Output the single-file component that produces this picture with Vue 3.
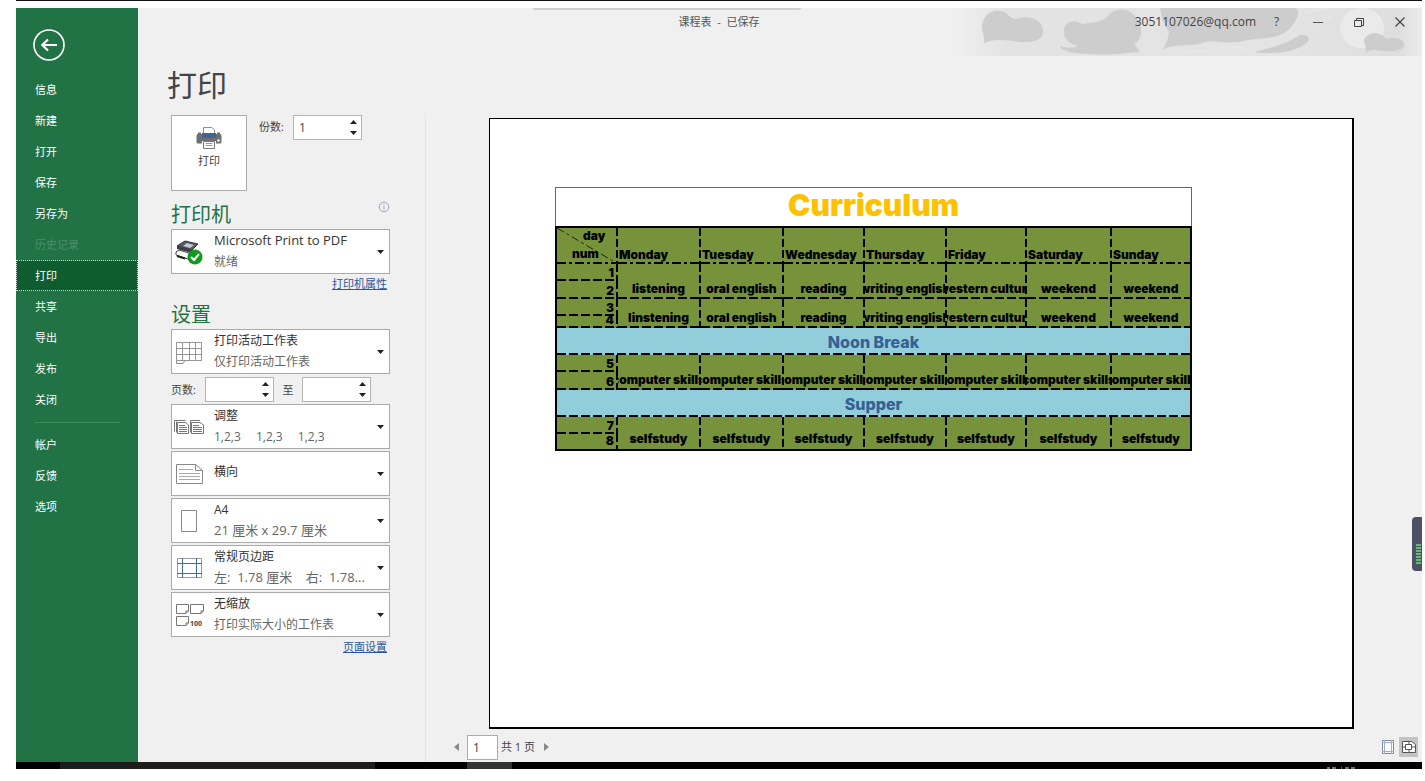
<script setup>
import { ref } from 'vue'

const navMain = [
  { label: '信息' },
  { label: '新建' },
  { label: '打开' },
  { label: '保存' },
  { label: '另存为' },
  { label: '历史记录', disabled: true },
  { label: '打印', active: true },
  { label: '共享' },
  { label: '导出' },
  { label: '发布' },
  { label: '关闭' },
]
const navExtra = [{ label: '帐户' }, { label: '反馈' }, { label: '选项' }]

const copies = ref('1')
const pageFrom = ref('')
const pageTo = ref('')
const pageNo = ref('1')

const layoutOptions = [
  { icon: 'collate', title: '调整', sub: '1,2,3\u2003 1,2,3\u2003 1,2,3' },
  { icon: 'landscape', title: '横向', sub: '' },
  { icon: 'paper', title: 'A4', sub: '21 厘米 x 29.7 厘米', latin: true },
  { icon: 'margins', title: '常规页边距', sub: '左:  1.78 厘米    右:  1.78...', latin: true },
  { icon: 'scale', title: '无缩放', sub: '打印实际大小的工作表' },
]

const days = ['Monday', 'Tuesday', 'Wednesday', 'Thursday', 'Friday', 'Saturday', 'Sunday']
const blocks = [
  { nums: [1, 2], cells: ['listening', 'oral english', 'reading', 'writing english', 'western culture', 'weekend', 'weekend'] },
  { nums: [3, 4], cells: ['linstening', 'oral english', 'reading', 'writing english', 'western culture', 'weekend', 'weekend'] },
  { band: 'Noon Break' },
  { nums: [5, 6], cells: Array(7).fill('computer skills') },
  { band: 'Supper' },
  { nums: [7, 8], cells: Array(7).fill('selfstudy') },
]
</script>

<template>
  <div class="screen">
    <div class="top-edge"></div>
    <div class="app">
      <nav class="sidebar">
        <button class="back" aria-label="返回">
          <svg width="34" height="34" viewBox="0 0 34 34" fill="none" stroke="#fff">
            <circle cx="17" cy="17" r="15" stroke-width="1.6" />
            <path d="M25 17H10.5M16 11.5L10.3 17L16 22.5" stroke-width="2.2" />
          </svg>
        </button>
        <button
          v-for="n in navMain"
          :key="n.label"
          class="nav-item"
          :class="{ active: n.active }"
          :disabled="n.disabled"
        >{{ n.label }}</button>
        <div class="nav-sep"></div>
        <button v-for="n in navExtra" :key="n.label" class="nav-item">{{ n.label }}</button>
      </nav>

      <div class="body">
        <header class="titlebar">
          <div class="pull-tab"></div>
          <svg class="clouds" width="472" height="48" viewBox="0 0 472 48">
            <defs>
              <linearGradient id="fade" x1="0" x2="1" y1="0" y2="0">
                <stop offset="0" stop-color="#e4e4e4" stop-opacity="0" />
                <stop offset="0.12" stop-color="#e3e3e3" />
                <stop offset="0.7" stop-color="#e4e4e4" />
                <stop offset="0.95" stop-color="#dedede" />
                <stop offset="1" stop-color="#ebebeb" />
              </linearGradient>
            </defs>
            <rect width="472" height="48" fill="url(#fade)" />
            <g fill="#cdcdcd">
              <path d="M32 20C32 6 44 0 54 4C60 7 60 11 66 11C80 6 92 12 93 22C94 32 84 35 70 34C55 32 42 30 33 36C36 31 33 28 32 20Z" />
              <path d="M114 24C113 14 124 10 132 16C140 14 150 16 158 8C166 -2 182 0 186 10C194 18 192 32 184 36L190 44C180 44 160 48 140 46C122 46 110 42 110 38C118 40 124 40 128 38C118 36 114 30 114 24Z" />
              <path d="M210 0H346C350 4 348 12 340 20C330 32 310 30 298 32C276 38 262 30 250 36C236 38 222 36 212 42Q218 34 219 24Q212 14 210 0Z" />
              <path d="M304 44C320 40 336 36 348 28C358 24 364 32 352 38C340 46 318 46 304 44Z" />
            </g>
            <ellipse cx="412" cy="20" rx="22" ry="20" fill="#eaeaea" />
            <path d="M414 46C418 42 415 38 414 34C414 24 430 22 436 31C446 28 456 32 454 38C452 44 434 44 426 42C420 42 416 44 414 46Z" fill="#cdcdcd" />
            <path d="M350 6L376 0M356 20L382 8M250 44Q280 34 306 44M236 46Q250 40 262 46" stroke="#eaeaea" stroke-width="2" stroke-dasharray="2 2" fill="none" />
          </svg>
          <div class="doc-title">课程表&nbsp; -&nbsp; 已保存</div>
          <div class="account">
            <span class="mail">3051107026@qq.com</span>
            <button class="win" aria-label="帮助">?</button>
            <button class="win" aria-label="最小化">
              <svg width="12" height="12" viewBox="0 0 12 12" stroke="#555" fill="none"><path d="M1 6.5H11" /></svg>
            </button>
            <button class="win" aria-label="还原">
              <svg width="12" height="12" viewBox="0 0 12 12" stroke="#444" fill="none"><path d="M1.5 4.5H8.5V10.5H1.5ZM3.5 4.5V2.5H10.5V9.5H8.5" /></svg>
            </button>
            <button class="win" aria-label="关闭窗口">
              <svg width="12" height="12" viewBox="0 0 12 12" stroke="#444" fill="none"><path d="M1.5 1.5L10.5 10.5M10.5 1.5L1.5 10.5" stroke-width="1.2" /></svg>
            </button>
          </div>
        </header>

        <div class="work">
          <section class="panel">
            <h1>打印</h1>
            <div class="print-row">
              <button class="print-btn">
                <svg width="26" height="24" viewBox="0 0 26 24">
                  <path d="M7.5 8V1.5H16L18.5 4V8" fill="#fff" stroke="#7c93ad" />
                  <path d="M2 8H24Q25.500 8 25.500 10V16Q25.500 17.500 24 17.500H2Q.5 17.500 .5 16V10Q.5 8 2 8Z" fill="#6d6f75" />
                  <rect x="6" y="7" width="14" height="5" fill="#41668c" />
                  <rect x="2" y="6.500" width="3" height="2" fill="#6d6f75" />
                  <rect x="21" y="6.500" width="3" height="2" fill="#6d6f75" />
                  <circle cx="22.500" cy="14.500" r="1.300" fill="#fff" />
                  <rect x="6" y="15" width="14" height="3" fill="#fff" />
                  <path d="M7.500 15.500H18.500V22.500H7.500Z" fill="#fff" stroke="#777" />
                  <path d="M9.500 17.500H16.500M9.500 19.500H16.500" stroke="#999" />
                </svg>
                <span>打印</span>
              </button>
              <label class="field-label" for="copies">份数:</label>
              <span class="spin">
                <input id="copies" v-model="copies" type="text" />
                <span class="arrows">
                  <button aria-label="增加份数"><svg width="7" height="4" viewBox="0 0 7 4"><path d="M0 4L3.500 0L7 4Z" fill="#222" /></svg></button>
                  <button aria-label="减少份数"><svg width="7" height="4" viewBox="0 0 7 4"><path d="M0 0L3.500 4L7 0Z" fill="#222" /></svg></button>
                </span>
              </span>
            </div>

            <div class="heading-row">
              <h2>打印机</h2>
              <svg class="info" width="12" height="12" viewBox="0 0 12 12" fill="none" stroke="#9da3c4">
                <circle cx="6" cy="6" r="4.800" />
                <path d="M6 5V9M6 3V4" />
              </svg>
            </div>
            <button class="drop" aria-haspopup="listbox">
              <span class="drop-icon">
                <svg width="30" height="28" viewBox="0 0 30 28">
                  <path d="M3 8L11 3L24 6L18 12Z" fill="#555863" stroke="#33353d" />
                  <path d="M9 8L13 5L20 7L16 10Z" fill="#c3c9d4" />
                  <path d="M3 8L18 12V15L3 11Z" fill="#3c3e47" />
                  <path d="M2 14L5 12L18 16L14 21L2 17Z" fill="#fff" stroke="#3c3e47" />
                  <path d="M3 18L11 20.500" stroke="#222" stroke-width="2" />
                  <circle cx="21" cy="19" r="7.500" fill="#119a1c" />
                  <path d="M17 19L20 22L25 16" fill="none" stroke="#fff" stroke-width="2" />
                </svg>
              </span>
              <span class="drop-text"><b class="latin">Microsoft Print to PDF</b><i>就绪</i></span>
              <svg class="caret" width="7" height="4" viewBox="0 0 7 4"><path d="M0 0L3.500 4L7 0Z" fill="#222" /></svg>
            </button>
            <a class="more" href="#">打印机属性</a>

            <h2 class="settings-title">设置</h2>
            <div class="settings">
              <button class="drop" aria-haspopup="listbox">
                <span class="drop-icon">
                  <svg width="30" height="28" viewBox="0 0 30 28" fill="none" stroke="#8a8a8a">
                    <path d="M2.500 4.500H27.500V22.500H2.500ZM8.500 4.500V22.500M15.500 4.500V22.500M21.500 4.500V22.500M2.500 10.500H27.500M2.500 16.500H27.500" stroke-width="0.900" />
                    <path d="M2.500 22.500V25.500H9L11 22.500" />
                  </svg>
                </span>
                <span class="drop-text"><b>打印活动工作表</b><i>仅打印活动工作表</i></span>
                <svg class="caret" width="7" height="4" viewBox="0 0 7 4"><path d="M0 0L3.500 4L7 0Z" fill="#222" /></svg>
              </button>

              <div class="pages-row">
                <label class="pages-label" for="from">页数:</label>
                <span class="spin">
                  <input id="from" v-model="pageFrom" type="text" />
                  <span class="arrows">
                    <button aria-label="起始页加一"><svg width="7" height="4" viewBox="0 0 7 4"><path d="M0 4L3.500 0L7 4Z" fill="#222" /></svg></button>
                    <button aria-label="起始页减一"><svg width="7" height="4" viewBox="0 0 7 4"><path d="M0 0L3.500 4L7 0Z" fill="#222" /></svg></button>
                  </span>
                </span>
                <label class="to-label" for="to">至</label>
                <span class="spin">
                  <input id="to" v-model="pageTo" type="text" />
                  <span class="arrows">
                    <button aria-label="结束页加一"><svg width="7" height="4" viewBox="0 0 7 4"><path d="M0 4L3.500 0L7 4Z" fill="#222" /></svg></button>
                    <button aria-label="结束页减一"><svg width="7" height="4" viewBox="0 0 7 4"><path d="M0 0L3.500 4L7 0Z" fill="#222" /></svg></button>
                  </span>
                </span>
              </div>

              <button v-for="o in layoutOptions" :key="o.icon" class="drop" aria-haspopup="listbox">
                <span class="drop-icon">
                  <svg v-if="o.icon === 'collate'" width="30" height="28" viewBox="0 0 30 28" fill="none" stroke="#777">
                    <path d="M.5 18.500V7.500H11.500M2.500 19.500V8.500" />
                    <path d="M3.500 9.500H11.500L14.500 12V20.500H3.500ZM5 12.500H11M5 14.500H13M5 16.500H13M5 18.500H13" fill="#fff" />
                    <path d="M16.500 19.500V7.500H26" />
                    <path d="M17.500 9.500H26L29.500 12V20.500H17.500ZM19 12.500H25M19 14.500H28M19 16.500H28M19 18.500H28" fill="#fff" />
                  </svg>
                  <svg v-else-if="o.icon === 'landscape'" width="30" height="28" viewBox="0 0 30 28" fill="none" stroke="#888">
                    <path d="M2.500 4.500H21.500L28.500 10.500V23.500H2.500ZM21.500 4.500V10.500H28.500" />
                    <path d="M5 9.500H19M5 13.500H26M5 16.500H26M5 19.500H26" stroke="#aaa" />
                  </svg>
                  <svg v-else-if="o.icon === 'paper'" width="30" height="28" viewBox="0 0 30 28" fill="none" stroke="#888">
                    <path d="M7.500 3.500H22.500V24.500H7.500Z" />
                  </svg>
                  <svg v-else-if="o.icon === 'margins'" width="30" height="28" viewBox="0 0 30 28" fill="none">
                    <path d="M3.500 4.500H27.500V23.500H3.500Z" stroke="#999" />
                    <path d="M8.500 4V24M22.500 4V24M3 9.500H28M3 19.500H28" stroke="#3f6ba6" />
                  </svg>
                  <svg v-else width="30" height="28" viewBox="0 0 30 28" fill="none" stroke="#777">
                    <path d="M2.500 3.500H14.500V10L12 12.500H2.500ZM14.500 10H12V12.500" />
                    <path d="M16.500 3.500H29.500V10L27 12.500H16.500ZM29.500 10H27V12.500" />
                    <path d="M2.500 15.500H14.500V22L12 24.500H2.500ZM14.500 22H12V24.500" />
                    <text x="16" y="25" class="pct">100</text>
                  </svg>
                </span>
                <span class="drop-text"><b>{{ o.title }}</b><i v-if="o.sub" :class="{ latin: o.latin }">{{ o.sub }}</i></span>
                <svg class="caret" width="7" height="4" viewBox="0 0 7 4"><path d="M0 0L3.500 4L7 0Z" fill="#222" /></svg>
              </button>
            </div>
            <a class="more" href="#">页面设置</a>
          </section>

          <section class="preview">
            <div class="paper">
              <table class="sheet">
                <colgroup>
                  <col class="c0" /><col class="c1" /><col class="c2" /><col class="c3" /><col class="c4" /><col class="c5" /><col class="c6" /><col class="c7" />
                </colgroup>
                <caption>Curriculum</caption>
                <tbody>
                  <tr class="days">
                    <th class="corner">
                      <svg class="diag" viewBox="0 0 61 36" preserveAspectRatio="none">
                        <path d="M0 0L61 36" stroke="#1d2a08" stroke-dasharray="8 3 3 3" />
                      </svg>
                      <span class="day">day</span>
                      <span class="num">num</span>
                    </th>
                    <th v-for="d in days" :key="d">{{ d }}</th>
                  </tr>
                  <template v-for="(b, bi) in blocks" :key="bi">
                    <tr v-if="b.band" class="band">
                      <td colspan="8">{{ b.band }}</td>
                    </tr>
                    <template v-else>
                      <tr :class="'upper u' + b.nums[0]">
                        <th>{{ b.nums[0] }}</th>
                        <td v-for="(c, ci) in b.cells" :key="ci" rowspan="2">
                          <div class="clip"><span>{{ c }}</span></div>
                        </td>
                      </tr>
                      <tr :class="'lower l' + b.nums[1]">
                        <th>{{ b.nums[1] }}</th>
                      </tr>
                    </template>
                  </template>
                </tbody>
              </table>
            </div>
            <footer class="pager">
              <button class="step" aria-label="上一页"><svg width="5" height="8" viewBox="0 0 5 8"><path d="M5 0V8L0 4Z" fill="#888" /></svg></button>
              <input v-model="pageNo" type="text" aria-label="当前页" />
              <span>共 1 页</span>
              <button class="step" aria-label="下一页"><svg width="5" height="8" viewBox="0 0 5 8"><path d="M0 0V8L5 4Z" fill="#888" /></svg></button>
              <div class="view-tools">
                <button aria-label="显示边距">
                  <svg width="14" height="14" viewBox="0 0 14 14" fill="none">
                    <path d="M1.500 .5H12.500V13.500H1.500Z" stroke="#888" fill="#fff" />
                    <path d="M3.500 0V14M10.500 0V14M1 2.500H13M1 11.500H13" stroke="#8db4dc" />
                  </svg>
                </button>
                <button class="on" aria-label="缩放到页面">
                  <svg width="14" height="14" viewBox="0 0 14 14" fill="none">
                    <path d="M.5 1.500H9.500L13.500 4.500V12.500H.5Z" stroke="#555" fill="#fff" />
                    <path d="M3.500 4.500H9.500V9.500H3.500ZM0 7H3M10 7H14M7 1V4M7 10V13" stroke="#555" />
                  </svg>
                </button>
              </div>
            </footer>
          </section>
        </div>
      </div>
      <div class="meter"><div class="bars"></div></div>
    </div>
    <div class="taskbar">
      <span class="running"></span>
      <span class="focused"></span>
      <svg width="30" height="2" viewBox="0 0 30 2"><path d="M0 1H3M5 1H9M14 1H15M18 1H22M24 1H28" stroke="#ddd" /></svg>
    </div>
  </div>
</template>

<style>
body { background: #fff; }
</style>

<style scoped>
* { box-sizing: border-box; }
.screen {
  height: 100vh;
  min-height: 760px;
  padding: 0 3px 12px 16px;
  display: flex;
  flex-direction: column;
  font: 11px/16px "Open Sans", "Noto Sans CJK SC", sans-serif;
  color: #444;
}
button, input { font: inherit; color: inherit; margin: 0; padding: 0; border: 0; background: none; border-radius: 0; }
button { cursor: pointer; }
.top-edge { height: 1px; background: #111; margin-bottom: 7px; flex: none; }
.app { flex: 1; min-height: 0; display: flex; background: #f0f0f0; position: relative; }

.sidebar { flex: none; width: 122px; background: #217346; display: flex; flex-direction: column; }
.back { width: 34px; height: 34px; margin: 20px 0 12px 16px; }
.back svg { display: block; }
.nav-item { height: 31px; flex: none; text-align: left; padding-left: 19px; color: #fff; }
.nav-item:disabled { color: #4b8f69; }
.nav-item.active { background: #0e5c2f; border: 1px dotted #cfe3d6; padding-left: 18px; }
.nav-sep { height: 1px; flex: none; margin: 7px 18px 6px 19px; background: #3f8a60; }

.body { flex: 1; min-width: 0; display: flex; flex-direction: column; }
.titlebar { position: relative; height: 48px; flex: none; }
.pull-tab { position: absolute; left: 395px; top: 0; width: 268px; height: 2px; background: #cfcfcf; border-radius: 0 0 3px 3px; }
.clouds { position: absolute; right: 0; top: 0; }
.doc-title { position: absolute; left: -122px; right: 0; top: 6px; text-align: center; color: #555; }
.account { position: relative; display: flex; justify-content: flex-end; align-items: center; height: 28px; padding-right: 2px; }
.mail { font-size: 12px; color: #444; }
.win { width: 41px; height: 24px; display: flex; align-items: center; justify-content: center; font-size: 12px; }

.work { flex: 1; min-height: 0; display: flex; }
.panel { flex: none; width: 287px; padding: 9px 35px 0 33px; }
h1 { margin: 0 0 0 -4px; font-size: 30px; line-height: 40px; font-weight: 400; color: #444; }
.print-row { display: flex; align-items: flex-start; margin-top: 10px; }
.print-btn { width: 76px; height: 76px; background: #fff; border: 1px solid #ababab; display: flex; flex-direction: column; align-items: center; padding-top: 10px; gap: 3px; }
.field-label { margin: 4px 9px 0 12px; }
.spin { display: flex; width: 69px; height: 25px; background: #fff; border: 1px solid #b4b4b4; }
.spin input { flex: 1; min-width: 0; padding-left: 5px; font-size: 12px; outline: 0; }
.arrows { width: 15px; display: flex; flex-direction: column; }
.arrows button { flex: 1; display: flex; align-items: center; justify-content: center; }
.heading-row { display: flex; justify-content: space-between; height: 38px; padding-top: 10px; }
h2 { margin: 0; font-size: 20px; line-height: 28px; font-weight: 400; color: #217346; }
.drop { width: 100%; height: 45px; background: #fff; border: 1px solid #ababab; display: flex; align-items: center; text-align: left; }
.drop-icon { width: 42px; flex: none; padding-left: 2px; }
.drop-icon svg { display: block; }
.drop-text { flex: 1; min-width: 0; align-self: stretch; font-size: 12px; line-height: 21px; white-space: pre; }
.drop-text b { display: block; font-weight: 400; color: #333; }
.drop-text i { display: block; font-style: normal; color: #666; }
.drop-text .latin { font-size: 13px; }
.drop-text b:only-child { line-height: 39px; }
.caret { margin-right: 5px; flex: none; }
.pct { font: 700 7px "Open Sans", sans-serif; fill: #444; stroke: none; }
.more { display: block; width: fit-content; margin: 2px 3px 0 auto; color: #2b579a; text-decoration: underline; }
.settings-title { margin-top: 9px; }
.settings { display: flex; flex-direction: column; gap: 2px; }
.pages-row { display: flex; align-items: center; padding-top: 1px; }
.pages-label { width: 34px; }
.to-label { width: 28px; text-align: center; }

.preview { flex: 1; min-width: 0; border-left: 1px solid #e4e4e4; display: flex; flex-direction: column; margin-top: 58px; }
.paper { flex: 1; min-height: 0; margin: 4px 68px 0 63px; background: #fff; border: 1px solid #000; border-width: 1px 2px 2px 1px; padding: 68px 0 0 65px; }
.pager { flex: none; height: 33px; display: flex; align-items: center; padding: 3px 4px 0 28px; }
.pager input { width: 31px; height: 25px; margin: 0 3px 0 7px; padding-left: 5px; background: #fff; border: 1px solid #ababab; font-size: 12px; }
.pager .step { width: 6px; display: flex; }
.pager span { margin-right: 9px; }
.view-tools { margin-left: auto; display: flex; gap: 2px; }
.view-tools button { width: 19px; height: 20px; display: flex; align-items: center; justify-content: center; }
.view-tools .on { background: #c4c4c4; }

.sheet {
  --h: repeating-linear-gradient(90deg, #000 0 9px, transparent 9px 12px);
  --v: repeating-linear-gradient(180deg, #000 0 8px, transparent 8px 11px);
  --hd: repeating-linear-gradient(90deg, #000 0 9px, transparent 9px 12px, #000 12px 15px, transparent 15px 18px);
  table-layout: fixed;
  width: 637px;
  border-collapse: separate;
  border-spacing: 0;
  border: 2px solid #000;
  font: 900 12px/12px Inter, sans-serif;
  color: #000;
}
.sheet caption { height: 39px; border: 1px solid #666; border-bottom: 0; color: #ffc000; font-size: 30px; line-height: 34px; }
.c0 { width: 61px; } .c1, .c2 { width: 83px; } .c3 { width: 81px; } .c4 { width: 82px; } .c5 { width: 80px; } .c6 { width: 85px; } .c7 { width: 78px; }
.sheet th, .sheet td {
  padding: 0 2px 0 0;
  font-weight: 900;
  vertical-align: bottom;
  background-color: #76933c;
  background-image: var(--v), var(--h);
  background-repeat: no-repeat;
  background-position: right top, left bottom;
  background-size: 2px 100%, 100% 2px;
}
.sheet th { text-align: right; padding: 0 4px 5px 0; line-height: 7px; }
.sheet th:last-child:not(:first-child), .sheet td:last-child { background-size: 0 0, 100% 2px; padding-right: 0; }
.days { height: 36px; }
.sheet .days th { text-align: left; padding: 0 0 3px 1px; line-height: 12px; background-image: var(--v), var(--hd); }
.sheet .days .corner { position: relative; padding: 0; vertical-align: top; }
.diag { position: absolute; inset: 0; width: 100%; height: 100%; }
.day, .num { display: block; position: relative; }
.day { padding: 2px 0 0 26px; }
.num { padding: 6px 0 0 15px; }
.upper { height: 17px; }
.lower { height: 18px; }
.l4 { height: 12px; }
.l8 { height: 15px; }
.sheet .l8 th, .sheet .u7 td { background-size: 2px 100%, 0 0; }
.sheet .u7 td:last-child { background-size: 0 0, 0 0; }
.clip { display: flex; justify-content: center; overflow: hidden; white-space: nowrap; padding-bottom: 3px; line-height: 14px; }
.clip span { flex: none; }
.band { height: 27px; }
.sheet .band td { background-color: #92cddc; background-size: 0 0, 100% 2px; color: #366092; text-align: center; vertical-align: middle; font-size: 16px; font-weight: 800; }

.meter { position: absolute; right: 0; top: 509px; width: 10px; height: 54px; background: #4d5062; border-radius: 4px 0 0 4px; padding: 27px 1px 6px 4px; }
.bars { height: 100%; background: repeating-linear-gradient(180deg, #6fb27a 0 2px, #3e5a5e 2px 3px); }

.taskbar { flex: none; height: 7px; background: #000; display: flex; align-items: flex-end; padding-left: 44px; }
.running { width: 315px; height: 7px; background: #1d1d1d; margin-right: 92px; }
.focused { width: 45px; height: 7px; background: #333; }
.taskbar svg { margin: 0 65px 0 auto; }
</style>
